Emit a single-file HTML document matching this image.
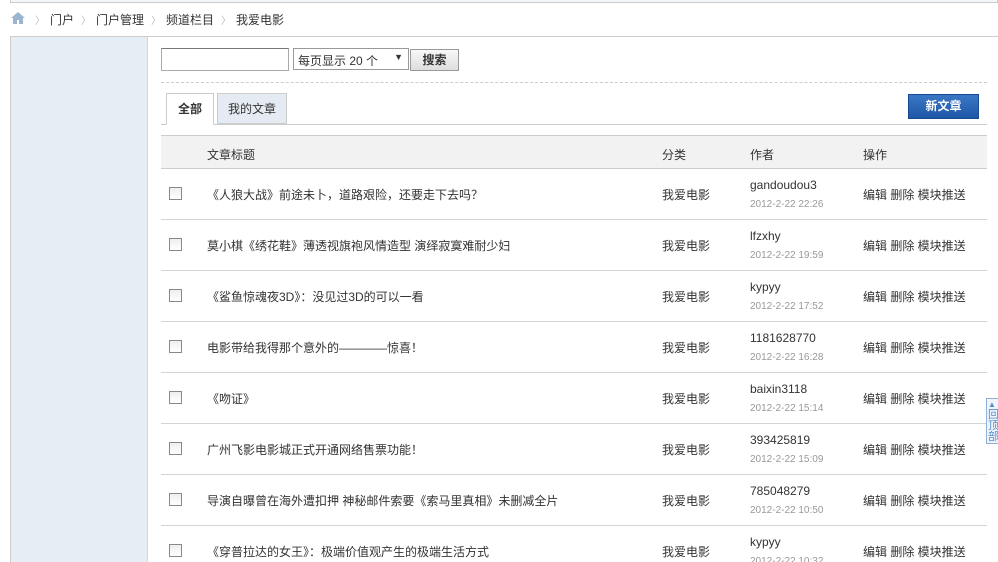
<!DOCTYPE html><html style="width:998px;height:562px;overflow:hidden"><head><meta charset="utf-8"><style>
*{margin:0;padding:0;box-sizing:border-box}
body{width:998px;height:562px;overflow:hidden;background:#fff;font-family:"Liberation Sans","Noto Sans CJK SC",sans-serif;font-size:12px;color:#333;position:relative}
.a{position:absolute}
.row{position:absolute;left:161px;width:826px;height:51px;border-bottom:1px solid #d4d4d4}
.row .cb{position:absolute;left:8px;top:18px;width:13px;height:13px;border:1px solid #888;background:linear-gradient(#eee,#fff)}
.row .t{position:absolute;left:46px;top:17px}
.row .c{position:absolute;left:501px;top:17px}
.row .u{position:absolute;left:589px;top:9px}
.row .d{position:absolute;left:589px;top:30px;font-size:10px;color:#999}
.row .o{position:absolute;left:702px;top:17px}
.s{color:#bbb;margin:0 5px 0 7px;font-size:10px}
</style></head><body>
<div class="a" style="left:10px;top:0;width:988px;height:3px;border:1px solid #ccc;border-top:0;background:#f3f6f9"></div>
<div class="a" style="left:11px;top:12px;width:14px;height:12px"><svg width="14" height="12"><path d="M7 0L0 6h2v6h4V8h2v4h4V6h2z" fill="#9db4cf"/></svg></div>
<div class="a" style="left:28px;top:11px;color:#333;white-space:pre"><span class="s">〉</span>门户<span class="s">〉</span>门户管理<span class="s">〉</span>频道栏目<span class="s">〉</span>我爱电影</div>
<div class="a" style="left:10px;top:36px;width:990px;height:540px;border:1px solid #ccc"></div>
<div class="a" style="left:11px;top:37px;width:137px;height:525px;background:#e5edf5;border-right:1px solid #d0d8e0"></div>
<div class="a" style="left:161px;top:48px;width:128px;height:23px;border:1px solid #aaa;border-top-color:#777"></div>
<div class="a" style="left:293px;top:48px;width:116px;height:22px;border:1px solid #999;padding:3px 4px">每页显示 20 个<span style="position:absolute;right:5px;top:3px;font-size:9px">▼</span></div>
<div class="a" style="left:410px;top:49px;width:49px;height:22px;border:1px solid #999;background:linear-gradient(#f8f8f8,#ddd);font-weight:bold;text-align:center;line-height:20px">搜索</div>
<div class="a" style="left:161px;top:82px;width:826px;border-top:1px dashed #ccc"></div>
<div class="a" style="left:161px;top:124px;width:826px;border-top:1px solid #ccc"></div>
<div class="a" style="left:166px;top:93px;width:48px;height:32px;border:1px solid #ccc;border-bottom:1px solid #fff;background:#fff;font-weight:bold;text-align:center;line-height:31px">全部</div>
<div class="a" style="left:217px;top:93px;width:70px;height:31px;border:1px solid #ccc;background:#e4ebf2;text-align:center;line-height:31px">我的文章</div>
<div class="a" style="left:908px;top:94px;width:71px;height:25px;background:linear-gradient(#3a78c4,#1e56a8);border:1px solid #174a90;color:#fff;font-weight:bold;text-align:center;line-height:23px">新文章</div>
<div class="a" style="left:161px;top:135px;width:826px;height:34px;background:#f2f2f2;border-top:1px solid #ccc;border-bottom:1px solid #ccc">
<span class="a" style="left:46px;top:10px">文章标题</span><span class="a" style="left:501px;top:10px">分类</span><span class="a" style="left:589px;top:10px">作者</span><span class="a" style="left:702px;top:10px">操作</span></div>
<div class="row" style="top:169px"><i class="cb"></i><span class="t">《人狼大战》前途未卜，道路艰险，还要走下去吗？</span><span class="c">我爱电影</span><span class="u">gandoudou3</span><span class="d">2012-2-22 22:26</span><span class="o">编辑 删除 模块推送</span></div>
<div class="row" style="top:220px"><i class="cb"></i><span class="t">莫小棋《绣花鞋》薄透视旗袍风情造型 演绎寂寞难耐少妇</span><span class="c">我爱电影</span><span class="u">lfzxhy</span><span class="d">2012-2-22 19:59</span><span class="o">编辑 删除 模块推送</span></div>
<div class="row" style="top:271px"><i class="cb"></i><span class="t">《鲨鱼惊魂夜3D》：没见过3D的可以一看</span><span class="c">我爱电影</span><span class="u">kypyy</span><span class="d">2012-2-22 17:52</span><span class="o">编辑 删除 模块推送</span></div>
<div class="row" style="top:322px"><i class="cb"></i><span class="t">电影带给我得那个意外的————惊喜！</span><span class="c">我爱电影</span><span class="u">1181628770</span><span class="d">2012-2-22 16:28</span><span class="o">编辑 删除 模块推送</span></div>
<div class="row" style="top:373px"><i class="cb"></i><span class="t">《吻证》</span><span class="c">我爱电影</span><span class="u">baixin3118</span><span class="d">2012-2-22 15:14</span><span class="o">编辑 删除 模块推送</span></div>
<div class="row" style="top:424px"><i class="cb"></i><span class="t">广州飞影电影城正式开通网络售票功能！</span><span class="c">我爱电影</span><span class="u">393425819</span><span class="d">2012-2-22 15:09</span><span class="o">编辑 删除 模块推送</span></div>
<div class="row" style="top:475px"><i class="cb"></i><span class="t">导演自曝曾在海外遭扣押 神秘邮件索要《索马里真相》未删减全片</span><span class="c">我爱电影</span><span class="u">785048279</span><span class="d">2012-2-22 10:50</span><span class="o">编辑 删除 模块推送</span></div>
<div class="row" style="top:526px"><i class="cb"></i><span class="t">《穿普拉达的女王》：极端价值观产生的极端生活方式</span><span class="c">我爱电影</span><span class="u">kypyy</span><span class="d">2012-2-22 10:32</span><span class="o">编辑 删除 模块推送</span></div>
<div class="a" style="left:986px;top:398px;width:14px;height:46px;border:1px solid #8fb1d6;background:#eef4fb;color:#5a8cc6;font-size:11px;line-height:11px;padding-left:1px;overflow:hidden"><span style="font-size:8px">▲</span><br>回<br>顶<br>部</div>
</body></html>
